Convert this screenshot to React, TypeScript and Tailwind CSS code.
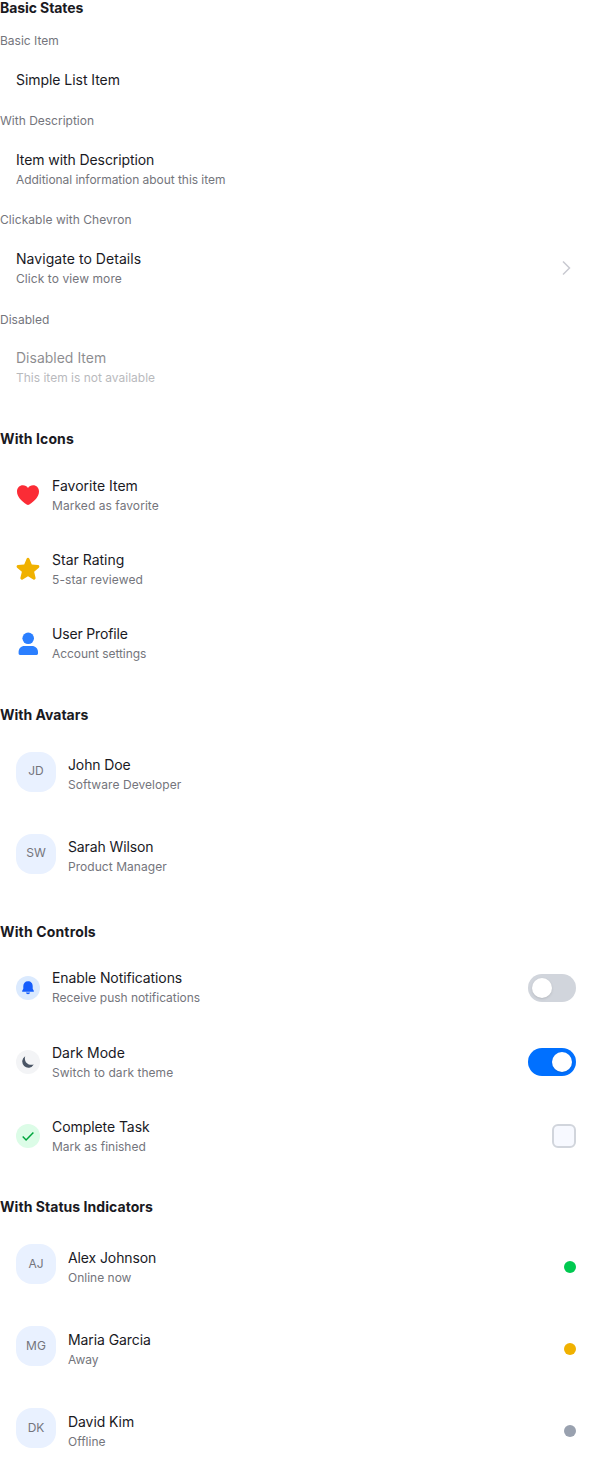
import type { ReactNode } from 'react';

function Section({ title, titleClass = '', children }: { title: string; titleClass?: string; children: ReactNode }) {
  return (
    <section className="flex flex-col gap-[16.9px]">
      <h3 className={`text-[14px] leading-[16px] font-bold text-[#1a1a1f] ${titleClass}`}>{title}</h3>
      <div className="flex flex-col gap-3">{children}</div>
    </section>
  );
}

function Labeled({ label, labelClass = '', children }: { label: string; labelClass?: string; children: ReactNode }) {
  return (
    <div className="flex flex-col gap-2">
      <p className={`pb-[1.08px] text-[12px] leading-[16px] text-[#74757c] ${labelClass}`}>{label}</p>
      {children}
    </div>
  );
}

type ItemProps = {
  title: string;
  titleClass?: string;
  description?: string;
  descriptionClass?: string;
  leading?: ReactNode;
  trailing?: ReactNode;
  disabled?: boolean;
};

function Item({ title, titleClass = '', description, descriptionClass = '', leading, trailing, disabled }: ItemProps) {
  return (
    <div
      className={
        disabled
          ? 'flex items-center gap-3 px-4 pt-[11.4px] pb-[12.6px] opacity-50'
          : 'flex items-center gap-3 px-4 py-3'
      }
    >
      {leading}
      <div className="min-w-0 flex-1">
        <div className={`pt-[0.8px] pb-[0.2px] text-[14px] leading-[18px] text-[#1a1a1f] ${titleClass}`}>{title}</div>
        {description && (
          <div className={`-mb-[0.5px] pt-[1.8px] text-[12px] leading-[18px] text-[#74757c] ${descriptionClass}`}>{description}</div>
        )}
      </div>
      {trailing}
    </div>
  );
}

function Avatar({ initials }: { initials: string }) {
  return (
    <div className="h-[46px] shrink-0">
      <div className="flex size-10 items-center justify-center rounded-2xl bg-[#e9f1ff] pb-[0.5px] text-[12px] leading-4 text-[#74757c]">
        {initials}
      </div>
    </div>
  );
}

function Heart() {
  return (
    <svg className="size-6 shrink-0 text-[#fb2c36]" viewBox="0 0 24 24" fill="currentColor">
      <path d="M12 22c-.5 0-.9-.2-1.300-.500C5.500 18.300 1 13.800 1 8.600 1 4.900 3.500 2.200 6.900 2.200c2.200 0 4 1 5.100 2.700 1.100-1.700 2.900-2.700 5.100-2.700 3.400 0 5.900 2.700 5.900 6.400 0 5.200-4.500 9.700-9.700 12.900-.4.300-.8.500-1.300.5Z" />
    </svg>
  );
}

function Star() {
  return (
    <svg className="size-6 shrink-0 text-[#f0b100]" viewBox="0 0 24 24" fill="currentColor">
      <path d="M10.788 3.21c.448-1.077 1.976-1.077 2.424 0l2.082 5.006 5.404.434c1.164.093 1.636 1.545.749 2.305l-4.117 3.527 1.257 5.273c.271 1.136-.964 2.033-1.96 1.425L12 18.354 7.373 21.18c-.996.608-2.231-.29-1.96-1.425l1.257-5.273-4.117-3.527c-.887-.76-.415-2.212.749-2.305l5.404-.434 2.082-5.005Z" transform="translate(-1.8 -1.9) scale(1.15)" />
    </svg>
  );
}

function Person() {
  return (
    <svg className="size-6 shrink-0 text-[#2b7fff]" viewBox="0 0 24 24" fill="currentColor">
      <circle cx="12.2" cy="6.3" r="5.8" />
      <path d="M8.4 14h7.4c3.6 0 6.2 2.6 6.2 6v1.6c0 .9-.6 1.4-1.4 1.4H4c-.9 0-1.4-.5-1.4-1.4V20c0-3.400 2.400-6 5.800-6Z" />
    </svg>
  );
}

function Bell() {
  return (
    <div className="flex size-6 shrink-0 items-center justify-center rounded-full bg-[#dbeafe] text-[#155dfc]">
      <svg className="size-4" viewBox="0 0 16 16" fill="currentColor">
        <path d="M8 1.200c-2.900 0-4.700 2.100-4.700 4.900v2.700L2.200 10.700c-.300.600 0 1.100.600 1.100h10.400c.600 0 .900-.500.600-1.100l-1.100-1.900V6.100c0-2.800-1.800-4.900-4.700-4.900Z" />
        <path d="M5.900 12.600h4.200c-.3 1-1.100 1.600-2.100 1.600s-1.800-.6-2.100-1.600Z" />
      </svg>
    </div>
  );
}

function Moon() {
  return (
    <div className="flex size-6 shrink-0 items-center justify-center rounded-full bg-[#f3f4f6] text-[#4a5565]">
      <svg className="size-4" viewBox="0 0 16 16" fill="currentColor">
        <path d="M5.200 2.200a6.200 6.200 0 1 0 8.600 8.400C7.900 12 3.600 7.800 5.200 2.200Z" />
      </svg>
    </div>
  );
}

function Check() {
  return (
    <div className="flex size-6 shrink-0 items-center justify-center rounded-full bg-[#dcfce7] text-[#00a63e]">
      <svg className="size-4" viewBox="0 0 16 16" fill="none" stroke="currentColor" strokeWidth="1.5">
        <path d="m2.700 8.500 3.400 3.500 7.300-7.600" />
      </svg>
    </div>
  );
}

function Toggle({ on }: { on?: boolean }) {
  return (
    <div className={on ? 'flex h-7 w-12 shrink-0 items-center justify-end rounded-full bg-[#0070ff] px-1' : 'flex h-7 w-12 shrink-0 items-center rounded-full bg-[#d1d5dc] px-1'}>
      <div className="size-5 rounded-full bg-white shadow-sm" />
    </div>
  );
}

function Chevron() {
  return (
    <svg className="size-5 shrink-0 text-[#c9cad1]" viewBox="0 0 20 20" fill="none" stroke="currentColor" strokeWidth="1.5">
      <path d="m7 2.500 6.500 6.500L7 15.500" />
    </svg>
  );
}

export default function App() {
  return (
    <main className="flex min-h-[1467px] flex-col gap-8 bg-white font-['Inter',sans-serif]">
      <Section title="Basic States" titleClass="tracking-[-0.08px]">
        <Labeled label="Basic Item">
          <Item title="Simple List Item" titleClass="tracking-[-0.05px]" />
        </Labeled>
        <Labeled label="With Description">
          <Item
            title="Item with Description"
            titleClass="tracking-[-0.09px]"
            description="Additional information about this item"
            descriptionClass="tracking-[-0.05px]"
          />
        </Labeled>
        <Labeled label="Clickable with Chevron" labelClass="tracking-[0.05px]">
          <Item
            title="Navigate to Details"
            titleClass="tracking-[0.05px]"
            description="Click to view more"
            descriptionClass="tracking-[0.08px]"
            trailing={<Chevron />}
          />
        </Labeled>
        <Labeled label="Disabled">
          <Item title="Disabled Item" description="This item is not available" disabled />
        </Labeled>
      </Section>
      <Section title="With Icons" titleClass="tracking-[0.1px]">
        <Item leading={<Heart />} title="Favorite Item" description="Marked as favorite" descriptionClass="tracking-[0.06px]" />
        <Item leading={<Star />} title="Star Rating" description="5-star reviewed" descriptionClass="tracking-[0.12px]" />
        <Item
          leading={<Person />}
          title="User Profile"
          titleClass="tracking-[-0.17px]"
          description="Account settings"
          descriptionClass="tracking-[-0.06px]"
        />
      </Section>
      <Section title="With Avatars">
        <Item
          leading={<Avatar initials="JD" />}
          title="John Doe"
          titleClass="tracking-[-0.12px]"
          description="Software Developer"
          descriptionClass="tracking-[0.07px]"
        />
        <Item
          leading={<Avatar initials="SW" />}
          title="Sarah Wilson"
          titleClass="tracking-[-0.12px]"
          description="Product Manager"
          descriptionClass="tracking-[0.05px]"
        />
      </Section>
      <Section title="With Controls" titleClass="tracking-[0.15px]">
        <Item
          leading={<Bell />}
          title="Enable Notifications"
          titleClass="tracking-[-0.1px]"
          description="Receive push notifications"
          descriptionClass="tracking-[-0.04px]"
          trailing={<Toggle />}
        />
        <Item
          leading={<Moon />}
          title="Dark Mode"
          description="Switch to dark theme"
          descriptionClass="tracking-[0.05px]"
          trailing={<Toggle on />}
        />
        <Item
          leading={<Check />}
          title="Complete Task"
          titleClass="tracking-[-0.07px]"
          description="Mark as finished"
          trailing={<div className="size-6 shrink-0 rounded-md border-2 border-[#d1d5dc] bg-[#f7f9ff]" />}
        />
      </Section>
      <Section title="With Status Indicators" titleClass="tracking-[0.05px]">
        <Item
          leading={<Avatar initials="AJ" />}
          title="Alex Johnson"
          titleClass="tracking-[-0.1px]"
          description="Online now"
          trailing={<div className="size-3 shrink-0 rounded-full bg-[#00c950]" />}
        />
        <Item
          leading={<Avatar initials="MG" />}
          title="Maria Garcia"
          titleClass="tracking-[-0.08px]"
          description="Away"
          trailing={<div className="size-3 shrink-0 rounded-full bg-[#f0b100]" />}
        />
        <Item
          leading={<Avatar initials="DK" />}
          title="David Kim"
          titleClass="tracking-[-0.08px]"
          description="Offline"
          trailing={<div className="size-3 shrink-0 rounded-full bg-[#99a1af]" />}
        />
      </Section>
    </main>
  );
}
